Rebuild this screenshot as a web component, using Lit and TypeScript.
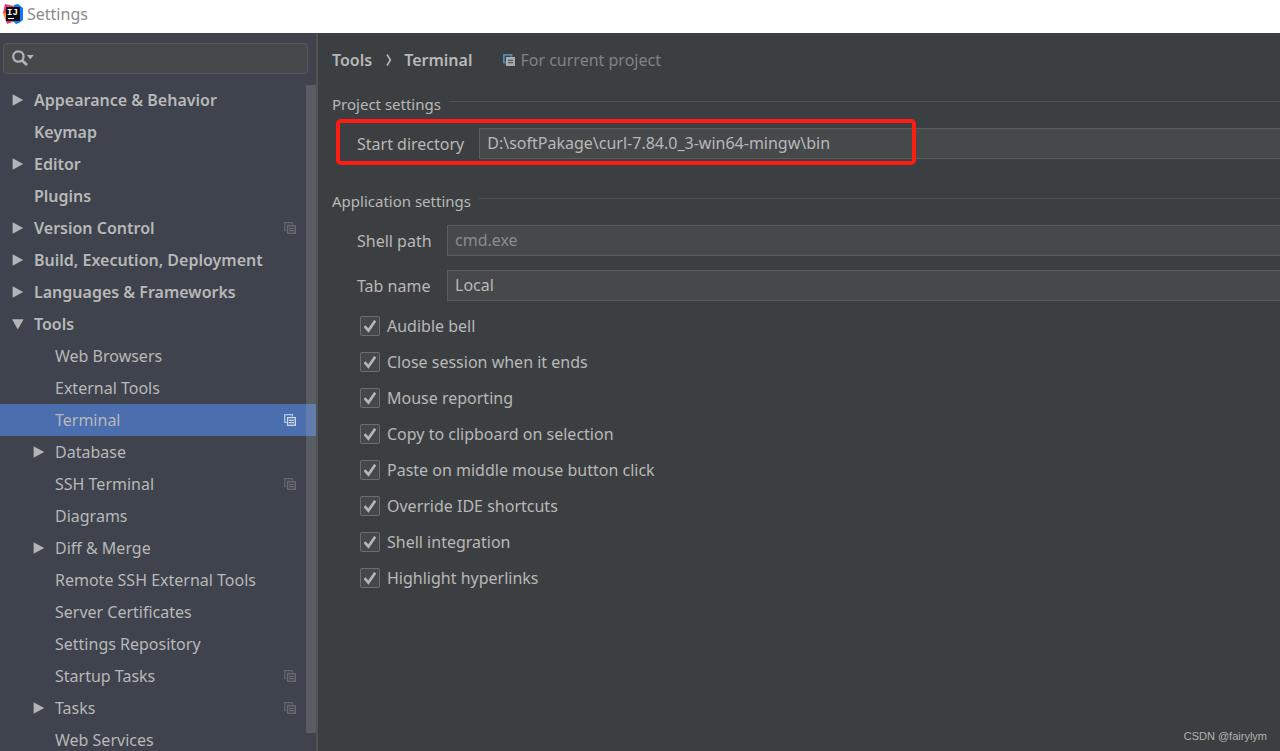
import { LitElement, html, svg, css, nothing } from "lit";
import { customElement } from "lit/decorators.js";
import { classMap } from "lit/directives/class-map.js";

interface TreeItem {
  label: string;
  level: 0 | 1;
  arrow?: "closed" | "open";
  project?: boolean;
  selected?: boolean;
}

const TREE: TreeItem[] = [
  { label: "Appearance & Behavior", level: 0, arrow: "closed" },
  { label: "Keymap", level: 0 },
  { label: "Editor", level: 0, arrow: "closed" },
  { label: "Plugins", level: 0 },
  { label: "Version Control", level: 0, arrow: "closed", project: true },
  { label: "Build, Execution, Deployment", level: 0, arrow: "closed" },
  { label: "Languages & Frameworks", level: 0, arrow: "closed" },
  { label: "Tools", level: 0, arrow: "open" },
  { label: "Web Browsers", level: 1 },
  { label: "External Tools", level: 1 },
  { label: "Terminal", level: 1, project: true, selected: true },
  { label: "Database", level: 1, arrow: "closed" },
  { label: "SSH Terminal", level: 1, project: true },
  { label: "Diagrams", level: 1 },
  { label: "Diff & Merge", level: 1, arrow: "closed" },
  { label: "Remote SSH External Tools", level: 1 },
  { label: "Server Certificates", level: 1 },
  { label: "Settings Repository", level: 1 },
  { label: "Startup Tasks", level: 1, project: true },
  { label: "Tasks", level: 1, arrow: "closed", project: true },
  { label: "Web Services", level: 1 },
];

const OPTIONS = [
  "Audible bell",
  "Close session when it ends",
  "Mouse reporting",
  "Copy to clipboard on selection",
  "Paste on middle mouse button click",
  "Override IDE shortcuts",
  "Shell integration",
  "Highlight hyperlinks",
];

const arrowIcon = (kind?: "closed" | "open") => html`
  <svg class="arrow" viewBox="0 0 12 12" aria-hidden="true">
    ${kind === "closed"
      ? svg`<path d="M0.6 0.2 L11.2 6 L0.6 11.8 Z" />`
      : kind === "open"
        ? svg`<path d="M0 1.2 H11.6 L5.8 11.6 Z" />`
        : nothing}
  </svg>
`;

const copyIcon = () => html`
  <svg class="copy" viewBox="0 0 12 12" aria-hidden="true">
    <path class="back" d="M2.6 8.4 H0.7 V0.7 H8.4 V2.6" />
    <rect class="front" x="3.6" y="3.6" width="7.7" height="7.7" />
    <path class="lines" d="M5 6.3 H10 M5 8.7 H10" />
  </svg>
`;

@customElement("app-root")
export class AppRoot extends LitElement {
  static styles = css`
    :host {
      display: flex;
      flex-direction: column;
      height: 100vh;
      overflow: hidden;
      background: #3c3f41;
      color: #b8b8b8;
      font-family: "Noto Sans", "Open Sans", sans-serif;
      font-size: 16px;
      line-height: 24px;
    }
    * {
      box-sizing: border-box;
    }
    .titlebar {
      display: flex;
      align-items: center;
      gap: 4px;
      flex: none;
      height: 33px;
      padding: 0 3px 6px;
      background: #ffffff;
      color: #8c8c8c;
    }
    .titlebar h1 {
      margin: 0;
      font-size: 16px;
      font-weight: 400;
    }
    .logo {
      width: 20px;
      height: 20px;
    }
    .logo text {
      font: bold 9px "Liberation Mono", monospace;
      fill: #ffffff;
    }
    .body {
      display: flex;
      flex: 1;
      min-height: 0;
    }
    .sidebar {
      position: relative;
      display: flex;
      flex-direction: column;
      flex: none;
      width: 318px;
      padding-top: 10px;
      overflow: hidden;
      background: #3e434d;
      border-right: 2px solid #505254;
    }
    .search {
      display: flex;
      align-items: center;
      gap: 1px;
      flex: none;
      height: 31px;
      margin: 0 8px 10px 3px;
      padding-left: 8px;
      background: #45494a;
      border: 1px solid #55595b;
      border-radius: 4px;
    }
    .search svg {
      flex: none;
      margin-bottom: 2px;
    }
    .search input {
      flex: 1;
      min-width: 0;
      height: 100%;
      padding: 0 8px;
      border: 0;
      outline: 0;
      background: transparent;
      color: inherit;
      font: inherit;
    }
    .tree {
      margin: 0;
      padding: 0;
      list-style: none;
    }
    .row {
      display: flex;
      align-items: center;
      gap: 10px;
      height: 32px;
      padding: 0 20px 0 12px;
      color: inherit;
      text-decoration: none;
      white-space: nowrap;
    }
    .row.top {
      font-weight: 600;
    }
    .row.child {
      padding-left: 33px;
    }
    .row.selected {
      background: #4b6eaf;
    }
    .name {
      flex: 1;
    }
    .arrow {
      flex: none;
      width: 12px;
      height: 12px;
      fill: #b2b4b6;
    }
    .copy {
      flex: none;
      width: 12px;
      height: 12px;
      fill: none;
      stroke: #6b6d70;
      stroke-width: 1.3;
    }
    .copy .back {
      stroke: #56687a;
    }
    .selected .copy {
      stroke: #d3d9e2;
    }
    .selected .copy .back {
      stroke: #a6cdf0;
    }
    .scroll {
      position: absolute;
      top: 52px;
      right: 0;
      bottom: 18px;
      width: 10px;
      background: #a6a6a6;
      opacity: 0.25;
    }
    .main {
      flex: 1;
      min-width: 0;
      padding: 15px 0 0 14px;
    }
    .crumbs {
      display: flex;
      align-items: center;
      margin-bottom: 20px;
    }
    .crumbs a {
      color: inherit;
      font-weight: 600;
      text-decoration: none;
    }
    .crumbs .chevron {
      margin: 0 12px 0 14px;
    }
    .scope {
      display: flex;
      align-items: center;
      gap: 5px;
      margin-left: 31px;
      color: #808284;
    }
    .scope .copy {
      stroke: #5a7d99;
    }
    .scope .back {
      stroke: #4f8ab5;
      stroke-width: 2;
    }
    .scope .front {
      fill: #a9abad;
      stroke: #a9abad;
    }
    .scope .lines {
      stroke: #55595c;
    }
    .group {
      display: flex;
      align-items: center;
      gap: 8px;
      margin: 0;
      font-size: 15px;
      font-weight: 400;
    }
    .group::after {
      content: "";
      flex: 1;
      height: 1px;
      margin-bottom: 6px;
      background: #505355;
    }
    .field {
      position: relative;
      display: flex;
      align-items: center;
      gap: 15px;
      padding-left: 25px;
    }
    .field label {
      min-width: 75px;
    }
    .start {
      margin: 12px 0 30px;
    }
    .shell {
      margin: 12px 0 14px;
    }
    .field input {
      flex: 1;
      min-width: 0;
      height: 31px;
      padding: 0 7px 1px;
      border: 1px solid #595d5f;
      border-right: 0;
      border-radius: 0;
      outline: 0;
      background: #45494a;
      color: #b8b8b8;
      font: inherit;
    }
    .field input::placeholder {
      color: #8a8c8d;
      opacity: 1;
    }
    .mark {
      position: absolute;
      top: -9px;
      left: 4px;
      width: 580px;
      height: 46px;
      border: 4px solid #ff1c12;
      border-radius: 5px;
      pointer-events: none;
    }
    .options {
      display: flex;
      flex-direction: column;
      align-items: flex-start;
      gap: 12px;
      padding: 13px 0 0 28px;
    }
    .option {
      display: flex;
      align-items: center;
      gap: 7px;
    }
    .box {
      display: grid;
    }
    .box input,
    .box svg {
      grid-area: 1 / 1;
      width: 20px;
      height: 20px;
      margin: 0;
    }
    .box input {
      appearance: none;
      background: #43494a;
      border: 1px solid #6b6e70;
      border-radius: 2px;
    }
    .box svg {
      z-index: 1;
      fill: none;
      stroke: #b4b6b7;
      stroke-width: 2.6;
      pointer-events: none;
      visibility: hidden;
    }
    .box input:checked + svg {
      visibility: visible;
    }
    .watermark {
      position: absolute;
      right: 13px;
      bottom: 7px;
      font: 11px/16px "Liberation Sans", sans-serif;
      color: #b0b2b3;
    }
  `;

  render() {
    return html`
      <header class="titlebar">
        <svg class="logo" viewBox="0 0 20 20" aria-hidden="true">
          <path fill="#fc8a2b" d="M0 9 L6 6 L7 16 L2 15 Z" />
          <path fill="#f0356b" d="M2 0 L11 2 L8 9 L0 9 Z" />
          <path fill="#f0356b" d="M2 14 L12 17 L4 20 Z" />
          <path fill="#087cfa" d="M11 1 L15 0 L20 4 V16 L16 19 L13 20 L10 17 Z" />
          <rect x="3" y="3" width="14" height="14" fill="#0b0b0d" />
          <text x="4" y="11">IJ</text>
          <rect x="5" y="14" width="6" height="1" fill="#ffffff" />
        </svg>
        <h1>Settings</h1>
      </header>
      <div class="body">
        <nav class="sidebar" aria-label="Settings categories">
          <label class="search">
            <svg width="24" height="18" viewBox="0 0 24 18" aria-hidden="true">
              <circle cx="6.4" cy="7.5" r="5.2" fill="none" stroke="#b2b4b6" stroke-width="2.2" />
              <path d="M10.2 11.4 L15 16" stroke="#b2b4b6" stroke-width="2.8" />
              <path d="M14.8 6 H21.8 L18.3 10.2 Z" fill="#b2b4b6" />
            </svg>
            <input type="text" aria-label="Search settings" />
          </label>
          <ul class="tree">
            ${TREE.map(
              (item) => html`
                <li>
                  <a
                    href="#"
                    class=${classMap({
                      row: true,
                      top: item.level === 0,
                      child: item.level === 1,
                      selected: !!item.selected,
                    })}
                  >
                    ${arrowIcon(item.arrow)}
                    <span class="name">${item.label}</span>
                    ${item.project ? copyIcon() : nothing}
                  </a>
                </li>
              `
            )}
          </ul>
          <div class="scroll"></div>
        </nav>
        <main class="main">
          <div class="crumbs">
            <a href="#">Tools</a>
            <svg class="chevron" width="6" height="14" viewBox="0 0 6 14" aria-hidden="true">
              <path d="M1 1.5 L4.4 7 L1 12.5" fill="none" stroke="#bbbbbb" stroke-width="1.5" />
            </svg>
            <a href="#">Terminal</a>
            <span class="scope">${copyIcon()}For current project</span>
          </div>

          <h2 class="group">Project settings</h2>
          <div class="field start">
            <label for="start">Start directory</label>
            <input id="start" type="text" value="D:\\softPakage\\curl-7.84.0_3-win64-mingw\\bin" />
            <div class="mark"></div>
          </div>

          <h2 class="group">Application settings</h2>
          <div class="field shell">
            <label for="shell">Shell path</label>
            <input id="shell" type="text" placeholder="cmd.exe" />
          </div>
          <div class="field">
            <label for="tab">Tab name</label>
            <input id="tab" type="text" value="Local" />
          </div>

          <div class="options">
            ${OPTIONS.map(
              (label) => html`
                <label class="option">
                  <span class="box">
                    <input type="checkbox" checked />
                    <svg viewBox="0 0 20 20" aria-hidden="true">
                      <path d="M4.6 10.2 L8.4 14.6 L15.2 4.8" />
                    </svg>
                  </span>
                  ${label}
                </label>
              `
            )}
          </div>
        </main>
      </div>
      <div class="watermark">CSDN @fairylym</div>
    `;
  }
}
